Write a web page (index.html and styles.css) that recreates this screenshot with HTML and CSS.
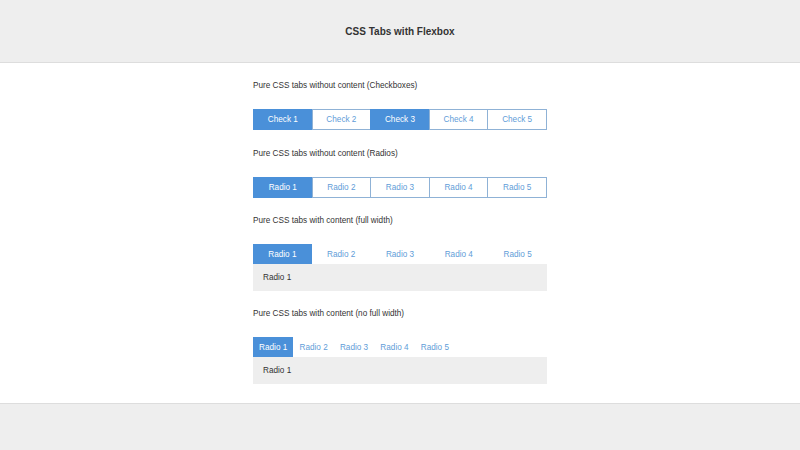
FILE: index.html
```html
<!DOCTYPE html>
<html>
<head>
<meta charset="utf-8">
<link rel="stylesheet" href="styles.css">
</head>
<body>
<header class="header"><h1 class="title">CSS Tabs with Flexbox</h1></header>
<main class="main">
  <section class="section section-first">
    <p class="label">Pure CSS tabs without content (Checkboxes)</p>
    <div class="tabs tabs-bordered">
      <span class="tab active">Check 1</span>
      <span class="tab">Check 2</span>
      <span class="tab active">Check 3</span>
      <span class="tab">Check 4</span>
      <span class="tab">Check 5</span>
    </div>
  </section>
  <section class="section">
    <p class="label">Pure CSS tabs without content (Radios)</p>
    <div class="tabs tabs-bordered">
      <span class="tab active">Radio 1</span>
      <span class="tab">Radio 2</span>
      <span class="tab">Radio 3</span>
      <span class="tab">Radio 4</span>
      <span class="tab">Radio 5</span>
    </div>
  </section>
  <section class="section">
    <p class="label">Pure CSS tabs with content (full width)</p>
    <div class="tabs tabs-plain">
      <span class="tab active">Radio 1</span>
      <span class="tab">Radio 2</span>
      <span class="tab">Radio 3</span>
      <span class="tab">Radio 4</span>
      <span class="tab">Radio 5</span>
    </div>
    <div class="panel">Radio 1</div>
  </section>
  <section class="section">
    <p class="label">Pure CSS tabs with content (no full width)</p>
    <div class="tabs tabs-compact">
      <span class="tab active">Radio 1</span>
      <span class="tab">Radio 2</span>
      <span class="tab">Radio 3</span>
      <span class="tab">Radio 4</span>
      <span class="tab">Radio 5</span>
    </div>
    <div class="panel">Radio 1</div>
  </section>
</main>
<footer class="footer"></footer>
</body>
</html>
```
FILE: styles.css
```css
* { box-sizing: border-box; }
html, body { margin: 0; padding: 0; }
body {
  font-family: "Liberation Sans", Arial, sans-serif;
  font-size: 8.2px;
  color: #333;
  background: #fff;
}
.header {
  height: 63px;
  background: #eee;
  border-bottom: 1px solid #ddd;
  display: flex;
  align-items: center;
  justify-content: center;
}
.title {
  margin: 0;
  font-size: 10px;
  font-weight: bold;
  color: #333;
}
.main {
  width: 294px;
  margin: 0 auto;
  padding: 16px 0 19px;
}
.section { margin-bottom: 16px; }
.section-first { margin-bottom: 17px; }
.section:last-child { margin-bottom: 0; }
.label {
  margin: 0 0 16px;
  line-height: 14px;
}
.tabs { display: flex; }
.tab {
  display: flex;
  align-items: center;
  justify-content: center;
  color: #5f9dd8;
  background: #fff;
}
.tabs-bordered .tab {
  flex: 1;
  height: 21px;
  border: 1px solid #8fb2d6;
  margin-left: -1px;
}
.tabs-bordered .tab:first-child { margin-left: 0; }
.tabs-plain .tab {
  flex: 1;
  height: 20px;
}
.tabs-compact .tab {
  height: 20px;
  padding: 0 6.1px;
}
.tab.active {
  background: #4a90d9;
  border-color: #4a90d9;
  color: #fff;
}
.panel {
  background: #eee;
  height: 27px;
  padding: 0 10px;
  display: flex;
  align-items: center;
}
.footer {
  height: 47px;
  background: #eee;
  border-top: 1px solid #ddd;
}
```
